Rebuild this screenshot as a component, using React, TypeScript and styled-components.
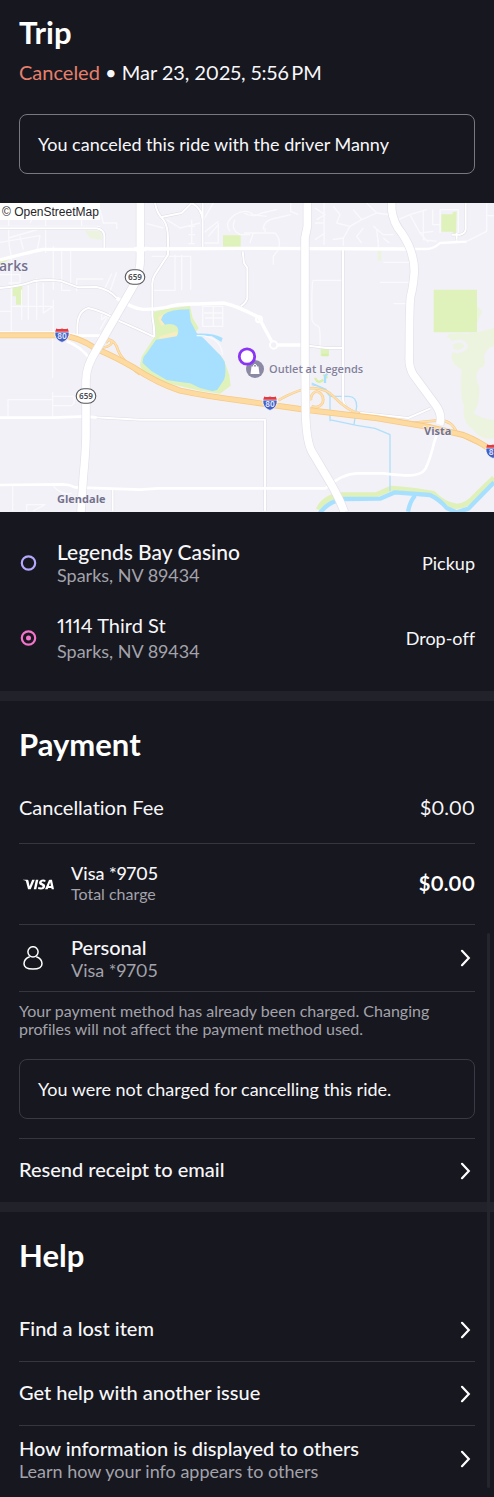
import React from "react";
import styled, { createGlobalStyle } from "styled-components";
import { SiVisa } from "react-icons/si";

const GlobalStyle = createGlobalStyle`
  *, *::before, *::after { box-sizing: border-box; }
  body {
    margin: 0;
    background: #17171f;
    color: #f7f7fa;
    font-family: Lato, "Open Sans", sans-serif;
    font-size: 20px;
    font-variant: no-common-ligatures proportional-nums;
  }
  h1, h2, p { margin: 0; }
`;

const Page = styled.main`
  position: relative;
  width: 100%;
  min-height: 100vh;
  background: #17171f;
`;

const Header = styled.header`
  padding: 14px 19px 29px;
`;

const Section = styled.section`
  padding: 25px 19px 0;
`;

const Divider = styled.div`
  height: 10px;
  background: #22222b;
`;

const Title = styled.h2<{ $gap: number }>`
  margin-bottom: ${(p) => p.$gap}px;
  font-size: 31px;
  line-height: 36px;
  font-weight: 700;
  color: #ffffff;
`;

const TripStatus = styled.p`
  margin-bottom: 28px;
  font-size: 20px;
  line-height: 28px;
`;

const Canceled = styled.span`
  color: #e6806c;
`;

const Notice = styled.p<{ $strong?: boolean }>`
  padding: 17px 18px;
  border: 1px solid ${(p) => (p.$strong ? "#78787f" : "#3a3a44")};
  border-radius: 8px;
  font-size: 18px;
  line-height: 24px;
`;

const MapPicture = styled.svg`
  display: block;
  width: 100%;
  height: auto;
  background: #f2f1f7;
`;

const Stops = styled.ul`
  display: flex;
  flex-direction: column;
  gap: 26px;
  margin: 0;
  padding: 28px 19px 27px;
  list-style: none;
`;

const Stop = styled.li`
  display: flex;
  align-items: center;
`;

const StopMark = styled.svg`
  flex: none;
  width: 18px;
  height: 18px;
  margin-right: 20px;
`;

const Texts = styled.div`
  display: flex;
  flex: 1;
  flex-direction: column;
  min-width: 0;
  padding-bottom: 3px;
`;

const StopTexts = styled(Texts)`
  margin-top: -1px;
  padding-bottom: 1px;
`;

const Primary = styled.span<{ $size?: number; $line?: number; $medium?: boolean }>`
  font-size: ${(p) => p.$size ?? 20}px;
  line-height: ${(p) => p.$line ?? 26}px;
  font-weight: ${(p) => (p.$medium ? 500 : 400)};
`;

const Secondary = styled.span<{ $size?: number; $line?: number }>`
  font-size: ${(p) => p.$size ?? 18}px;
  line-height: ${(p) => p.$line ?? 20}px;
  color: #a3a3ab;
`;

const StopKind = styled.span`
  font-size: 18px;
  line-height: 24px;
`;

const Row = styled.div<{ $height: number }>`
  display: flex;
  align-items: center;
  min-height: ${(p) => p.$height}px;
  border-bottom: 1px solid #363640;
`;

const RowButton = styled.button<{ $height: number; $line?: "top" | "bottom" }>`
  display: flex;
  align-items: center;
  width: 100%;
  min-height: ${(p) => p.$height}px;
  padding: 0;
  border: 0 solid #363640;
  border-top-width: ${(p) => (p.$line === "top" ? 1 : 0)}px;
  border-bottom-width: ${(p) => (p.$line === "bottom" ? 1 : 0)}px;
  background: none;
  color: inherit;
  font: inherit;
  text-align: left;
  cursor: pointer;
`;

const LeadIcon = styled.span`
  display: flex;
  flex: none;
  width: 48px;
  margin-left: 4px;
`;

const Amount = styled.span<{ $bold?: boolean }>`
  padding-bottom: 2px;
  font-size: 20px;
  line-height: 26px;
  font-weight: ${(p) => (p.$bold ? 700 : 400)};
  color: ${(p) => (p.$bold ? "#ffffff" : "inherit")};
`;

const Note = styled.p`
  padding: 10px 0 21px;
  font-size: 16px;
  line-height: 18px;
  color: #a3a3ab;
`;

const NoticeGap = styled.div`
  height: 19px;
`;

const ChevronIcon = styled.svg`
  flex: none;
  width: 20px;
  height: 20px;
`;

const ScrollThumb = styled.div`
  position: absolute;
  top: 933px;
  right: 4px;
  bottom: 9px;
  width: 3px;
  border-radius: 2px;
  background: #25252d;
`;

function Chevron() {
  return (
    <ChevronIcon viewBox="0 0 20 20" fill="none" stroke="#fff" strokeWidth="2.2" strokeLinecap="round" aria-hidden="true">
      <path d="M7 2.8 13.800 10 7 17.200" />
    </ChevronIcon>
  );
}

function PersonIcon() {
  return (
    <svg width="20" height="24" viewBox="0 0 20 24" fill="none" stroke="#fff" strokeWidth="1.5" aria-hidden="true">
      <circle cx="10" cy="5.800" r="5.100" />
      <path d="M6.700 10.700C3.200 12 1 14.800 1 17.700c0 3.300 3.600 5.300 9 5.300s9-2 9-5.300c0-2.900-2.200-5.700-5.700-7" />
    </svg>
  );
}

function Interstate({ x, y, label = "80" }: { x: number; y: number; label?: string }) {
  return (
    <g transform={`translate(${x} ${y})`}>
      <path d="M-7-3c-.7 5 2 8.600 7 10.400C5 5.600 7.700 2 7-3Z" fill="#4460c4" stroke="#fff" strokeWidth=".8" />
      <path d="M-6.800-3.200-5.800-6.600Q-3-5.300 0-6.600 3-5.300 5.800-6.600L6.800-3.200Z" fill="#e23b41" />
      <text x={label.length === 1 ? -2 : 0} y="4" textAnchor="middle" fontFamily="Noto Sans, sans-serif" fontSize="8" fontWeight="600" fill="#e7eafc">{label}</text>
    </g>
  );
}

function StateRoute({ x, y }: { x: number; y: number }) {
  return (
    <g transform={`translate(${x} ${y})`}>
      <rect x="-9.800" y="-7.300" width="19.600" height="14.600" rx="7.800" fill="#fff" stroke="#55555c" strokeWidth="1.100" />
      <text y="3" textAnchor="middle" fontFamily="Noto Sans, sans-serif" fontSize="8" fontWeight="600" fill="#4a4a50">659</text>
    </g>
  );
}

const faintStreets = [
  "M26 0V100Q26 130 34 160V385", "M0 70H300", "M90 60 120 0M60 100 70 140", "M0 118 120 98 112 140M25 105 118 78",
  "M245 0V75M137 150V40M160 130V260M185 140V262H212M212 140V250", "M0 215H60V240H25",
  "M110 225V350M85 245V350M65 260V350M130 240V330L160 310M160 290V400M0 325H34M34 310H160",
  "M230 265V228H310M350 208 330 265M312 262 335 212", "M158 400V525M158 568V640M24 640V590H160M160 608H215Q228 600 220 580H160",
  "M305 330 350 360M305 330V350L330 330M320 345 300 380", "M455 160H572V260M525 155V262H460M545 155V262",
  "M608 310H668V370H608ZM612 330H668M640 310V370M615 345H668M590 398Q660 395 668 455",
  "M500 50 540 75 600 60M565 70H585M565 95H585M565 122H585M575 50V122", "M640 0 605 60 610 90 655 55M625 100 655 65M655 60V120H610",
  "M690 85Q670 60 705 35Q740 15 760 35L800 40M705 50Q690 80 720 95H750",
  "M440 62 490 75M485 50 500 80M300 20 310 60H350V78", "M732 30Q760 45 785 30L830 20M790 80Q790 50 830 45L872 35M795 75V90M732 90H825Q845 110 835 140L820 160V185M760 90 750 120",
  "M872 0V25L895 35M945 15 975 35 950 50M972 0V125M972 60 945 60M975 90 945 110",
  "M1000 10 1020 35 1010 60 1050 70 1085 50 1060 20M1050 70 1030 105 998 110M1030 105V128M1085 50 1130 30M1100 0 1130 30 1165 35M1120 70 1150 95 1180 95M1090 75 1070 100 1085 120M1130 80 1135 120M1150 105 1168 120",
  "M1195 50 1230 35 1260 90 1300 85M1230 35 1280 20M1270 20V110L1310 115M1298 20V65H1320M1260 90 1285 118",
  "M1320 20H1375V95M1320 90V20M1370 105V115M1400 115 1460 85V0M1460 38H1482",
  "M1136 140 1134 110M1150 178H1232M1140 238H1230M1180 302H1225M1025 232H940Q934 240 936 350Q940 365 955 370Q962 375 960 435",
  "M38 850V924M80 924V905H135L100 924M160 850Q190 880 215 870",
];

const streets = [
  "M0 76H290Q313 80 313 100V137", "M608 0V137M545 30 575 0M485 42 545 30M575 0Q605 15 608 50",
  "M465 0Q470 30 490 50Q504 70 504 105V155L465 215Q455 230 457 250V340Q463 370 463 402",
  "M728 145 732 180 742 195V285Q738 300 722 310", "M0 255Q60 250 100 235 140 228 180 233L235 253 290 252Q330 260 350 285",
  "M463 402Q430 385 360 355 310 325 265 315 230 325 232 380V395", "M1029 140V590Q1032 618 1065 628L1225 645 1292 616",
  "M1370 110V90M1397 0V80Q1395 92 1380 95H1355", "M285 643 420 650H795V924", "M338 858V924",
  "M925 428 980 435H1029",
];

function TripMap() {
  return (
    <MapPicture viewBox="0 0 494 309" role="img" aria-label="Map of the pickup location near Outlet at Legends">
      <rect width="494" height="309" fill="#f2f1f7" />
      <g transform="scale(.33333)" fill="none" strokeLinejoin="round" strokeLinecap="butt">
        <g fill="#e0f2bb">
          <path d="M458 327 500 317 570 309 578 345 596 375 585 390 660 455 672 471 688 516 692 548 660 572 600 563 500 540 430 512 420 486 425 461 463 402Z" />
          <path d="M669 97H722V131H669ZM38 250H67V305H48V280H38ZM0 170 30 168 0 185ZM1324 34H1364V86H1324ZM1358 28 1370 25 1368 95 1358 88ZM1301 260H1431V388H1301ZM962 438H987V459H962Z" />
        </g>
        <g fill="#ecf4df">
          <path d="M255 83 303 85 306 110 270 106ZM1133 143H1144V173H1133ZM1431 308 1447 325 1431 360ZM1445 385 1482 375V430Q1462 430 1452 460 1462 490 1440 495 1420 520 1438 550 1440 610 1420 630 1450 650 1482 650V706Q1440 712 1420 680 1385 660 1392 610 1378 570 1385 500 1350 480 1355 455 1370 420 1340 400 1350 385 1400 392 1425 400Z" />
        </g>
        <path d="M1355 420Q1390 405 1400 430 1380 455 1355 440" stroke="#f2f1f7" strokeWidth="10" />
        <path d="M473 345Q490 325 555 318L565 330 510 350 485 370ZM480 400 530 385 535 404 475 412Z" fill="#f8ecc1" />
        <path d="M490 335Q510 319 568 319L572 355 590 390 610 405 662 458 674 476Q680 510 672 530L652 560 638 565 600 555 570 541 545 538 500 531 455 505 428 480Q426 465 440 451L468 410 530 400Q540 385 530 370 515 360 495 365L483 350Z" fill="#a7e0ff" />
        <path d="M590 392Q640 390 668 405L664 417 635 399 590 401Z" fill="#a7e0ff" />
        <path d="M955 920Q975 880 1025 876L1130 875 1175 856Q1250 862 1300 872 1330 905 1370 910 1400 910 1430 875L1482 825" stroke="#dff0b9" strokeWidth="16" />
        <path d="M960 930Q985 895 1030 888L1140 887 1185 868 1290 876Q1320 890 1340 915L1370 928 1405 917 1482 838M1245 878Q1230 895 1224 926" stroke="#a7e0ff" strokeWidth="13" />
        <path d="M935 545Q970 550 990 580H1045Q1070 580 1070 610L1062 665M990 580V655M988 650 1070 667 1125 676 1170 695V865M935 540 980 560" stroke="#afe0fa" strokeWidth="4" />
        <path d="M945 525Q955 545 970 530M970 515 982 525M965 456H985" stroke="#d6f0a5" strokeWidth="7" />
        <path d="M975 540V520L982 512" stroke="#a7e0ff" strokeWidth="7" />
        {faintStreets.map((d) => <path key={d} d={d} stroke="#fafafd" strokeWidth="4" />)}
        {streets.map((d) => <path key={d} d={d} stroke="#dedde5" strokeWidth="9" />)}
        {streets.map((d) => <path key={d} d={d} stroke="#ffffff" strokeWidth="6" />)}
        <g stroke="#ffffff" strokeWidth="10">
          <path d="M0 171Q90 147 130 139H400L422 134 450 138 732 136 1220 138" />
          <path d="M1220 138H1280Q1300 138 1320 120L1400 116" strokeWidth="7" />
          <path d="M350 285Q400 318 430 319 460 320 500 313 530 302 590 303L670 300Q710 308 776 343L821 426H905" />
          <path d="M0 389H170L235 398H320M200 415Q240 430 268 465" strokeWidth="8" />
          <path d="M0 644H160L258 640 290 644" strokeWidth="8" />
          <path d="M0 846 190 844Q210 845 225 853L420 860 475 856H977Q1025 812 1072 811L1150 811Q1225 820 1242 816 1268 812 1277 796 1290 770 1302 720L1315 680" strokeWidth="8" />
        </g>
        <circle cx="777" cy="349" r="9" stroke="#fff" strokeWidth="6" />
        <circle cx="821" cy="426" r="11" fill="#f2f1f7" stroke="#fff" strokeWidth="6" />
        <g stroke="#f5c884" strokeWidth="8">
          <path d="M275 437Q335 435 335 418 330 403 318 420M315 408Q340 408 350 430 360 470 420 514M835 592Q900 555 940 555 985 560 1000 580 1045 625 1080 632" />
          <path d="M948 565Q975 572 968 600 955 618 935 610M948 565Q930 575 933 592M1232 660 1315 652Q1355 650 1370 688 1400 710 1482 740" />
        </g>
        <g stroke="#fde0ae" strokeWidth="5">
          <path d="M275 437Q335 435 335 418 330 403 318 420M315 408Q340 408 350 430 360 470 420 514M835 592Q900 555 940 555 985 560 1000 580 1045 625 1080 632" />
          <path d="M948 565Q975 572 968 600 955 618 935 610M948 565Q930 575 933 592M1232 660 1315 652Q1355 650 1370 688 1400 710 1482 740" />
        </g>
        <path d="M0 397H180Q230 399 290 438 350 464 400 493 470 540 540 563 620 580 732 594L922 621 1132 646 1292 673 1390 696Q1440 715 1482 748" stroke="#f7c985" strokeWidth="18" />
        <path d="M0 397H180Q230 399 290 438 350 464 400 493 470 540 540 563 620 580 732 594L922 621 1132 646 1292 673 1390 696Q1440 715 1482 748" stroke="#fddaa0" strokeWidth="13" />
        <g>
          {[["#e2e1e9", 27], ["#ffffff", 23]].map(([color, width]) => (
            <g key={color} stroke={String(color)} strokeWidth={width}>
              <path d="M421-9V165Q421 205 405 240L290 440Q258 490 258 530V700Q257 750 250 820L243 927" />
              <path d="M922-9V70L915 105V471L917 640Q920 715 935 745L992 841Q1020 890 1033 927" />
              <path d="M1175-9V20Q1180 60 1205 90 1243 145 1243 205 1240 250 1232 280 1228 300 1228 456 1225 490 1240 515L1307 606Q1328 635 1319 665" />
            </g>
          ))}
        </g>
        <path d="M400 139Q421 128 440 139 421 150 400 139" fill="#fff" stroke="#fff" strokeWidth="7" />
      </g>
      <rect width="100" height="17" fill="#fff" />
      <text x="2" y="13" fontFamily="Liberation Sans, sans-serif" fontSize="12" fill="#26262b">© OpenStreetMap</text>
      <g fontFamily="Open Sans, sans-serif" fill="#74718d" stroke="#f7f6fb" strokeWidth="1" paintOrder="stroke">
        <text x="-1" y="68" fontSize="14" fontWeight="600">arks</text>
        <text x="269" y="170" fontSize="11" fontWeight="600" fill="#82809a">Outlet at Legends</text>
        <text x="424" y="232" fontSize="11" fontWeight="700">Vista</text>
        <text x="57" y="300" fontSize="11" fontWeight="700">Glendale</text>
      </g>
      <StateRoute x={135} y={74} />
      <StateRoute x={86} y={193} />
      <Interstate x={62} y={132} />
      <Interstate x={270} y={200} />
      <Interstate x={493} y={248} label="8" />
      <circle cx="255" cy="166" r="9" fill="#8b89a3" />
      <path d="M251.500 163.500H258.500L259.500 171H250.500Z" fill="#fff" />
      <path d="M253.300 164V163Q255 159.500 256.700 163V164" fill="none" stroke="#fff" strokeWidth="1" />
      <circle cx="247" cy="153.500" r="7.700" fill="#fff" stroke="#8a35f5" strokeWidth="2.800" />
    </MapPicture>
  );
}

export default function App() {
  return (
    <Page>
      <GlobalStyle />
      <Header>
        <Title as="h1" $gap={8}>Trip</Title>
        <TripStatus><Canceled>Canceled</Canceled> • Mar 23, 2025, 5:56{"\u2009"}PM</TripStatus>
        <Notice $strong>You canceled this ride with the driver Manny</Notice>
      </Header>

      <TripMap />

      <Stops>
        <Stop>
          <StopMark viewBox="0 0 18 18" fill="none" aria-hidden="true">
            <circle cx="9.500" cy="9" r="6.700" stroke="#b5a8ff" strokeWidth="2.200" />
          </StopMark>
          <StopTexts>
            <Primary $size={21} $medium>Legends Bay Casino</Primary>
            <Secondary>Sparks, NV 89434</Secondary>
          </StopTexts>
          <StopKind>Pickup</StopKind>
        </Stop>
        <Stop>
          <StopMark viewBox="0 0 18 18" fill="none" aria-hidden="true">
            <circle cx="9.500" cy="9" r="6.700" stroke="#f573cb" strokeWidth="2.200" />
            <circle cx="9.500" cy="9" r="2.500" fill="#f573cb" />
          </StopMark>
          <StopTexts>
            <Primary $line={28}>1114 Third St</Primary>
            <Secondary $line={24}>Sparks, NV 89434</Secondary>
          </StopTexts>
          <StopKind>Drop-off</StopKind>
        </Stop>
      </Stops>

      <Divider />

      <Section>
        <Title $gap={11}>Payment</Title>
        <Row $height={71}>
          <Texts><Primary>Cancellation Fee</Primary></Texts>
          <Amount>$0.00</Amount>
        </Row>
        <Row $height={81}>
          <LeadIcon><SiVisa size={31} color="#fff" aria-hidden="true" /></LeadIcon>
          <Texts>
            <Primary $size={18} $line={22} $medium>Visa *9705</Primary>
            <Secondary $size={16}>Total charge</Secondary>
          </Texts>
          <Amount $bold>$0.00</Amount>
        </Row>
        <RowButton type="button" $height={67} $line="bottom">
          <LeadIcon><PersonIcon /></LeadIcon>
          <Texts>
            <Primary $medium>Personal</Primary>
            <Secondary>Visa *9705</Secondary>
          </Texts>
          <Chevron />
        </RowButton>
        <Note>Your payment method has already been charged. Changing profiles will not affect the payment method used.</Note>
        <Notice>You were not charged for cancelling this ride.</Notice>
        <NoticeGap />
        <RowButton type="button" $height={64} $line="top">
          <Texts><Primary $medium>Resend receipt to email</Primary></Texts>
          <Chevron />
        </RowButton>
      </Section>

      <Divider />

      <Section>
        <Title $gap={25}>Help</Title>
        <RowButton type="button" $height={64} $line="bottom">
          <Texts><Primary $medium>Find a lost item</Primary></Texts>
          <Chevron />
        </RowButton>
        <RowButton type="button" $height={64} $line="bottom">
          <Texts><Primary $medium>Get help with another issue</Primary></Texts>
          <Chevron />
        </RowButton>
        <RowButton type="button" $height={66}>
          <Texts>
            <Primary $medium>How information is displayed to others</Primary>
            <Secondary>Learn how your info appears to others</Secondary>
          </Texts>
          <Chevron />
        </RowButton>
      </Section>
      <ScrollThumb />
    </Page>
  );
}
